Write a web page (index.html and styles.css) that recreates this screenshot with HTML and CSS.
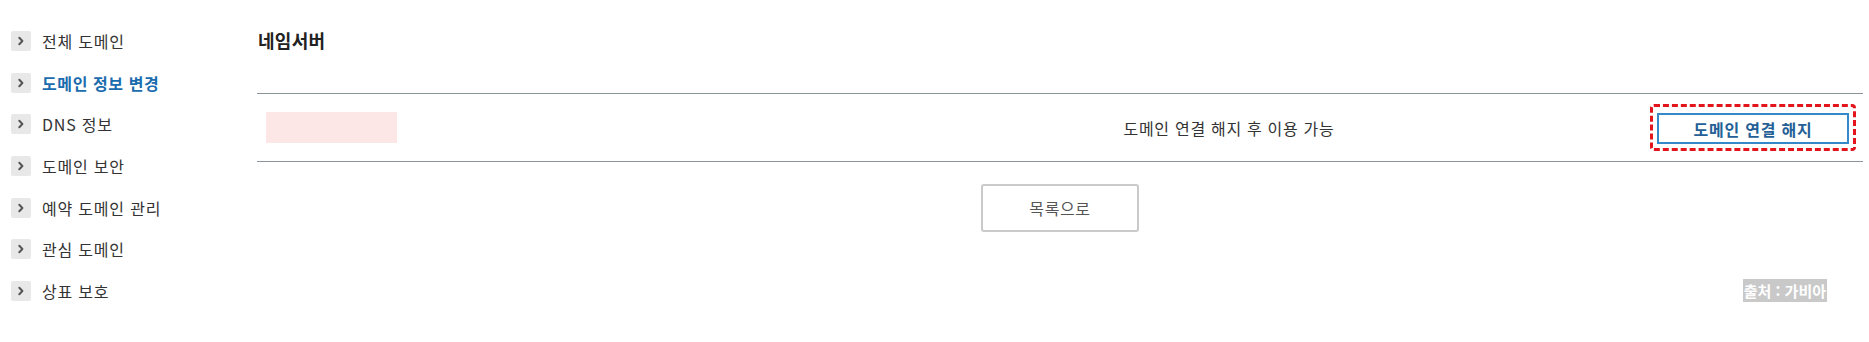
FILE: index.html
```html
<!DOCTYPE html>
<html lang="ko">
<head>
<meta charset="utf-8">
<title>네임서버</title>
<link rel="stylesheet" href="styles.css">
</head>
<body>
<div class="page">
  <nav class="side">
    <ul class="menu">
      <li class="item"><span class="chev"><svg viewBox="0 0 20 20" width="20" height="20"><path d="M8.3 6.8 L11.4 10 L8.3 13.2" fill="none" stroke="#555" stroke-width="2" stroke-linecap="round" stroke-linejoin="round"/></svg></span><span>전체 도메인</span></li>
      <li class="item active"><span class="chev"><svg viewBox="0 0 20 20" width="20" height="20"><path d="M8.3 6.8 L11.4 10 L8.3 13.2" fill="none" stroke="#555" stroke-width="2" stroke-linecap="round" stroke-linejoin="round"/></svg></span><span>도메인 정보 변경</span></li>
      <li class="item"><span class="chev"><svg viewBox="0 0 20 20" width="20" height="20"><path d="M8.3 6.8 L11.4 10 L8.3 13.2" fill="none" stroke="#555" stroke-width="2" stroke-linecap="round" stroke-linejoin="round"/></svg></span><span>DNS 정보</span></li>
      <li class="item"><span class="chev"><svg viewBox="0 0 20 20" width="20" height="20"><path d="M8.3 6.8 L11.4 10 L8.3 13.2" fill="none" stroke="#555" stroke-width="2" stroke-linecap="round" stroke-linejoin="round"/></svg></span><span>도메인 보안</span></li>
      <li class="item"><span class="chev"><svg viewBox="0 0 20 20" width="20" height="20"><path d="M8.3 6.8 L11.4 10 L8.3 13.2" fill="none" stroke="#555" stroke-width="2" stroke-linecap="round" stroke-linejoin="round"/></svg></span><span>예약 도메인 관리</span></li>
      <li class="item"><span class="chev"><svg viewBox="0 0 20 20" width="20" height="20"><path d="M8.3 6.8 L11.4 10 L8.3 13.2" fill="none" stroke="#555" stroke-width="2" stroke-linecap="round" stroke-linejoin="round"/></svg></span><span>관심 도메인</span></li>
      <li class="item"><span class="chev"><svg viewBox="0 0 20 20" width="20" height="20"><path d="M8.3 6.8 L11.4 10 L8.3 13.2" fill="none" stroke="#555" stroke-width="2" stroke-linecap="round" stroke-linejoin="round"/></svg></span><span>상표 보호</span></li>
    </ul>
  </nav>
  <main class="main">
    <h2 class="title">네임서버</h2>
    <div class="row">
      <div class="cell-name"><span class="masked"></span></div>
      <div class="cell-msg">도메인 연결 해지 후 이용 가능</div>
      <div class="cell-act">
        <div class="highlight"><button class="btn-unlink">도메인 연결 해지</button></div>
      </div>
    </div>
    <div class="actions">
      <button class="btn-list">목록으로</button>
    </div>
    <div class="source-row"><span class="source">출처 : 가비아</span></div>
  </main>
</div>
</body>
</html>
```
FILE: styles.css
```css
* { box-sizing: border-box; }
html, body { margin: 0; padding: 0; background: #fff; }
body {
  font-family: "Noto Sans CJK KR", "Noto Sans", "Liberation Sans", sans-serif;
  color: #333;
  width: 1869px;
  height: 342px;
  overflow: hidden;
}
.page {
  display: flex;
}
.side {
  width: 257px;
  flex: none;
}
.menu {
  list-style: none;
  margin: 0;
  padding: 20px 0 0 11px;
}
.item {
  height: 41.7px;
  display: flex;
  align-items: center;
  font-size: 16px;
  color: #333;
  letter-spacing: 0.8px;
}
.item.active {
  color: #1b6cae;
  font-weight: 700;
  letter-spacing: 0.6px;
}
.chev {
  width: 20px;
  height: 20px;
  background: #e8e8e8;
  border-radius: 2px;
  display: flex;
  margin-right: 11px;
}
.main {
  width: 1606px;
  flex: none;
}
.title {
  margin: 0;
  padding-top: 28px;
  font-size: 18px;
  line-height: 24px;
  font-weight: 700;
  color: #222;
  height: 93px;
  padding-left: 1px;
  letter-spacing: 0.3px;
}
.row {
  display: grid;
  grid-template-columns: 565px 1fr 227px;
  align-items: center;
  height: 69px;
  border-top: 1px solid #8a969b;
  border-bottom: 1px solid #8a969b;
}
.cell-name {
  padding-left: 9px;
  display: flex;
  align-items: center;
}
.masked {
  display: block;
  width: 131px;
  height: 31px;
  background: #fde6e6;
}
.cell-msg {
  text-align: center;
  font-size: 16px;
  color: #333;
  letter-spacing: 0.7px;
}
.cell-act {
  display: flex;
  justify-content: flex-end;
  padding-right: 7px;
}
.highlight {
  border: 3px dashed #e3141c;
  border-radius: 4px;
  padding: 6px 4px 4px 4px;
  width: 206px;
  height: 47px;
  display: flex;
}
.btn-unlink {
  width: 192px;
  height: 31px;
  border: 2px solid #3589c8;
  background: #fff;
  color: #245f96;
  font-family: inherit;
  font-size: 16px;
  font-weight: 700;
  letter-spacing: 0.8px;
  padding: 0;
  cursor: pointer;
}
.actions {
  display: flex;
  justify-content: center;
  padding-top: 22px;
}
.btn-list {
  width: 158px;
  height: 48px;
  border: 2px solid #cacaca;
  border-radius: 3px;
  background: #fff;
  color: #555;
  font-family: inherit;
  font-size: 16px;
  letter-spacing: 0.6px;
  padding: 0;
}
.source-row {
  display: flex;
  justify-content: flex-end;
  padding-top: 47px;
  padding-right: 36px;
}
.source {
  background: #c9c9c9;
  color: #fff;
  font-weight: 700;
  font-size: 15px;
  line-height: 23px;
  padding: 0 1px;
  height: 23px;
}
```
